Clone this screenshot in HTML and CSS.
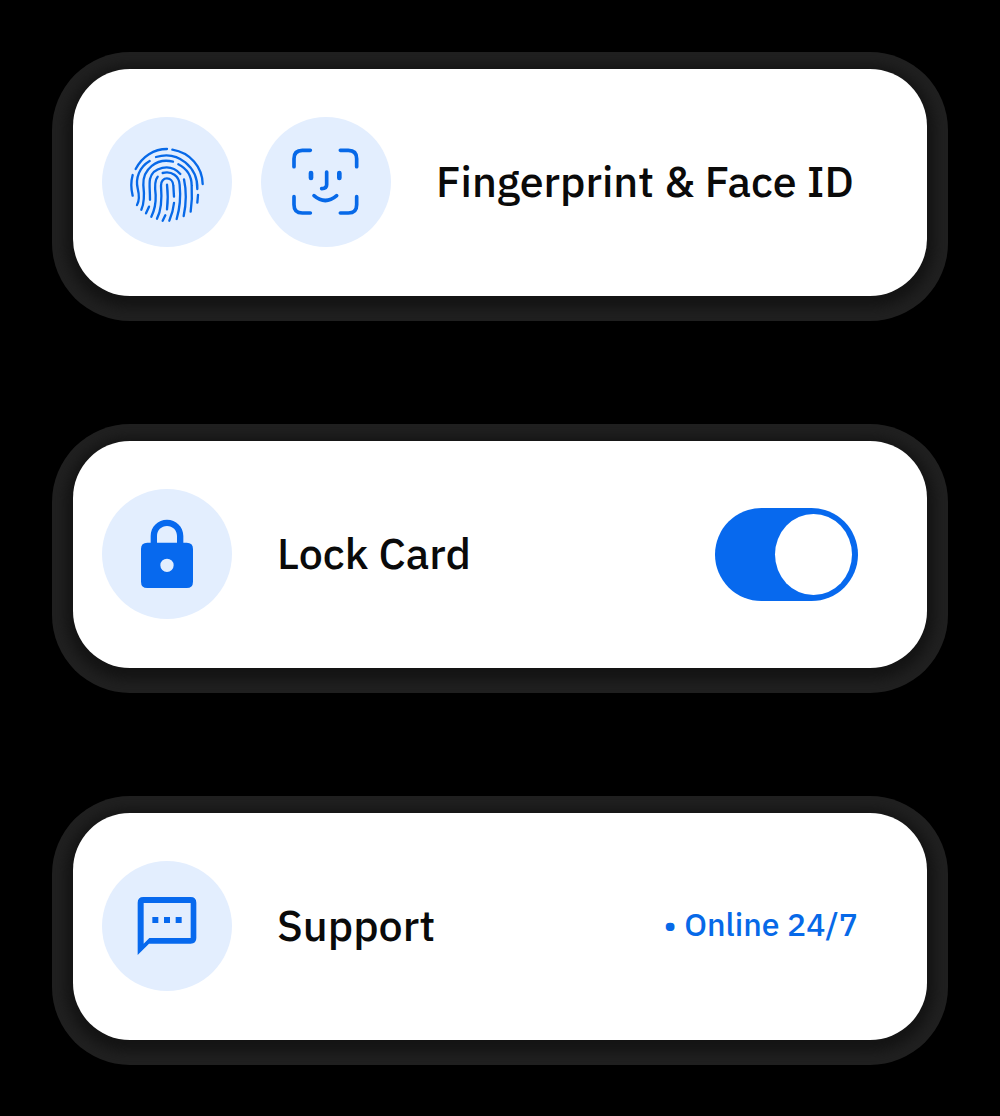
FILE: index.html
```html
<!DOCTYPE html>
<html lang="en">
<head>
<meta charset="utf-8">
<meta name="viewport" content="width=device-width, initial-scale=1">
<title>Card security settings</title>
<link rel="stylesheet" href="styles.css">
</head>
<body>
<main class="settings">
  <section class="card">
    <div class="icons">
      <svg class="icon icon-line" viewBox="6 6 390 390" aria-hidden="true">
        <path d="M107 162C127 124 162 102 201 102M217 104C270 113 307 155 308 207M98 180C91 205 93 222 98 242M294 240L292 263"/>
        <path d="M168 126C235 105 294 158 292 222M149 138C118 156 106 190 113 220C119 245 116 262 111 270"/>
        <path d="M219 140C170 128 128 162 130 210C134 245 133 265 124 284M235 148C262 162 275 185 275 212C277 245 275 270 272 290"/>
        <path d="M150 254C150 225 147 208 150 192C158 158 210 142 241 177M147 275L138 295M252 193C260 230 258 270 251 303"/>
        <path d="M188 174C215 167 238 183 239 210C243 250 238 285 230 312M173 185C164 195 164 215 167 240C168 265 163 287 154 305"/>
        <path d="M171 311C185 285 186 250 183 212C182 183 219 183 220 212L222 245M222 264C220 285 215 300 208 317"/>
        <path d="M201 209C204 235 204 260 201 283M196 301L188 317"/>
      </svg>
      <svg class="icon icon-face" viewBox="10 8 390 390" aria-hidden="true">
        <path d="M109 157V133Q109 108 134 108H158M248 108H272Q297 108 297 133V157M109 247V271Q109 296 134 296H158M248 296H272Q297 296 297 271V247M169 244Q203 273 237 244"/>
        <path d="M207 173V211Q207 222 192 223"/>
        <path class="eyes" d="M160 176V191M245 176V191"/>
      </svg>
    </div>
    <h2 class="title">Fingerprint &amp; Face ID</h2>
  </section>

  <section class="card">
    <svg class="icon icon-solid" viewBox="6 6 390 390" aria-hidden="true">
      <path fill-rule="evenodd" d="M152 167V147C152 119 174 98 201 98S250 119 250 147V167H260Q279 167 279 186V284Q279 303 260 303H142Q123 303 123 284V186Q123 167 142 167ZM171 167H231V147C231 130 218 117 201 117S171 130 171 147ZM201 215A20 20 0 1 0 201 255A20 20 0 1 0 201 215Z"/>
    </svg>
    <label class="title" for="lock">Lock Card</label>
    <input class="switch" id="lock" type="checkbox" role="switch" checked>
  </section>

  <section class="card">
    <svg class="icon icon-solid" viewBox="6 6 390 390" aria-hidden="true">
      <path fill-rule="evenodd" d="M130 114H272Q289 114 289 131V237Q289 254 272 254H147L113 288V131Q113 114 130 114ZM131 132V254L148 237H272V132ZM157 174H175V192H157ZM192 174H210V192H192ZM227 174H245V192H227Z"/>
    </svg>
    <h2 class="title">Support</h2>
    <p class="status">• Online 24/7</p>
  </section>
</main>
</body>
</html>
```
FILE: styles.css
```css
* {
  box-sizing: border-box;
}

body {
  margin: 0;
  background: #000;
  color: #0a0a0a;
  font-family: "IBM Plex Sans", "Noto Sans", sans-serif;
}

.settings {
  display: flex;
  flex-direction: column;
  gap: 145px;
  padding: 69px 73px 77px;
}

.card {
  display: flex;
  align-items: center;
  gap: 45px;
  padding: 48px 69px 49px 29px;
  border-radius: 57px;
  background: #fff;
  box-shadow: 0 4px 12px 8px #141414, 0 4px 0 21px #202020;
}

.icons {
  display: flex;
  gap: 29px;
}

.icon {
  flex: none;
  width: 130px;
  height: 130px;
  border-radius: 50%;
  background: #e3eefe;
}

.icon-line,
.icon-face {
  fill: none;
  stroke: #0769e8;
  stroke-width: 7;
  stroke-linecap: round;
}

.icon-face {
  stroke-width: 11;
}

.eyes {
  stroke-width: 14;
}

.icon-solid {
  fill: #0769ee;
}

.title {
  margin: 0;
  padding-bottom: 3px;
  font-size: 43px;
  font-weight: 500;
  line-height: 56px;
  white-space: nowrap;
}

.switch {
  appearance: none;
  display: flex;
  align-items: center;
  width: 143px;
  height: 93px;
  margin: 0 0 0 auto;
  padding: 6px;
  border-radius: 47px;
  background: #9aa4b2;
  cursor: pointer;
}

.switch::before {
  content: "";
  width: 77px;
  height: 81px;
  border-radius: 50%;
  background: #fff;
}

.switch:checked {
  justify-content: flex-end;
  background: #0769ee;
}

.status {
  margin: 0 0 0 auto;
  padding-bottom: 5px;
  color: #0769e8;
  font-size: 32px;
  font-weight: 500;
  line-height: 44px;
  white-space: nowrap;
}
```
